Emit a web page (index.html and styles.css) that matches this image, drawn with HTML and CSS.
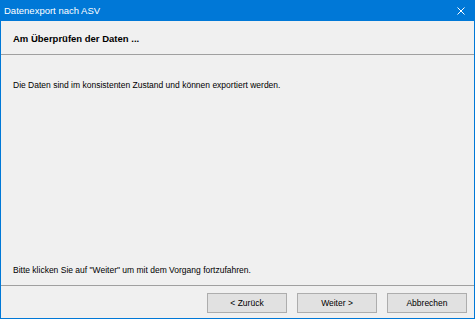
FILE: index.html
```html
<!DOCTYPE html>
<html lang="de">
<head>
<meta charset="utf-8">
<title>Datenexport nach ASV</title>
<link rel="stylesheet" href="styles.css">
</head>
<body>
<div class="window">
  <div class="titlebar">
    <span class="title">Datenexport nach ASV</span>
    <span class="close">
      <svg width="10" height="10" viewBox="0 0 10 10"><path d="M1.5 1.5 L8.5 8.5 M8.5 1.5 L1.5 8.5" stroke="#fff" stroke-width="1" fill="none"/></svg>
    </span>
  </div>
  <div class="frame">
    <div class="header">Am Überprüfen der Daten ...</div>
    <div class="content">
      <p class="msg">Die Daten sind im konsistenten Zustand und können exportiert werden.</p>
      <p class="msg">Bitte klicken Sie auf "Weiter" um mit dem Vorgang fortzufahren.</p>
    </div>
    <div class="footer">
      <button class="btn">&lt; Zurück</button>
      <button class="btn">Weiter &gt;</button>
      <button class="btn">Abbrechen</button>
    </div>
  </div>
</div>
</body>
</html>
```

FILE: styles.css
```css
html, body {
  margin: 0;
  padding: 0;
  background: #f0f0f0;
}
.window {
  width: 475px;
  height: 319px;
  display: flex;
  flex-direction: column;
  font-family: "Liberation Sans", Arial, sans-serif;
  font-size: 8.5px;
  color: #000;
}
.titlebar {
  height: 21px;
  flex: none;
  background: #0078d7;
  display: flex;
  align-items: center;
  justify-content: space-between;
  padding: 0 9px 0 4px;
}
.title {
  color: #fff;
  font-size: 9.5px;
  line-height: 21px;
}
.close {
  display: flex;
  width: 10px;
  height: 10px;
}
.frame {
  flex: 1;
  display: flex;
  flex-direction: column;
  border: 1px solid #0078d7;
  border-top: none;
  background: #f0f0f0;
}
.header {
  height: 30px;
  padding: 3px 12px 0;
  line-height: 30px;
  font-weight: bold;
  font-size: 9.5px;
  border-bottom: 1px solid #a0a0a0;
  flex: none;
}
.content {
  flex: 1;
  display: flex;
  flex-direction: column;
  justify-content: space-between;
  padding: 25px 12px 9px;
  border-bottom: 1px solid #a0a0a0;
}
.msg {
  margin: 0;
  line-height: 11px;
}
.footer {
  height: 32px;
  flex: none;
  display: flex;
  justify-content: flex-end;
  gap: 10px;
  padding: 7px 7px 0 0;
  box-sizing: border-box;
}
.btn {
  width: 80px;
  height: 20px;
  margin: 0;
  padding: 0;
  background: #e1e1e1;
  border: 1px solid #adadad;
  font-family: "Liberation Sans", Arial, sans-serif;
  font-size: 8.5px;
  color: #000;
  line-height: 18px;
}
```
